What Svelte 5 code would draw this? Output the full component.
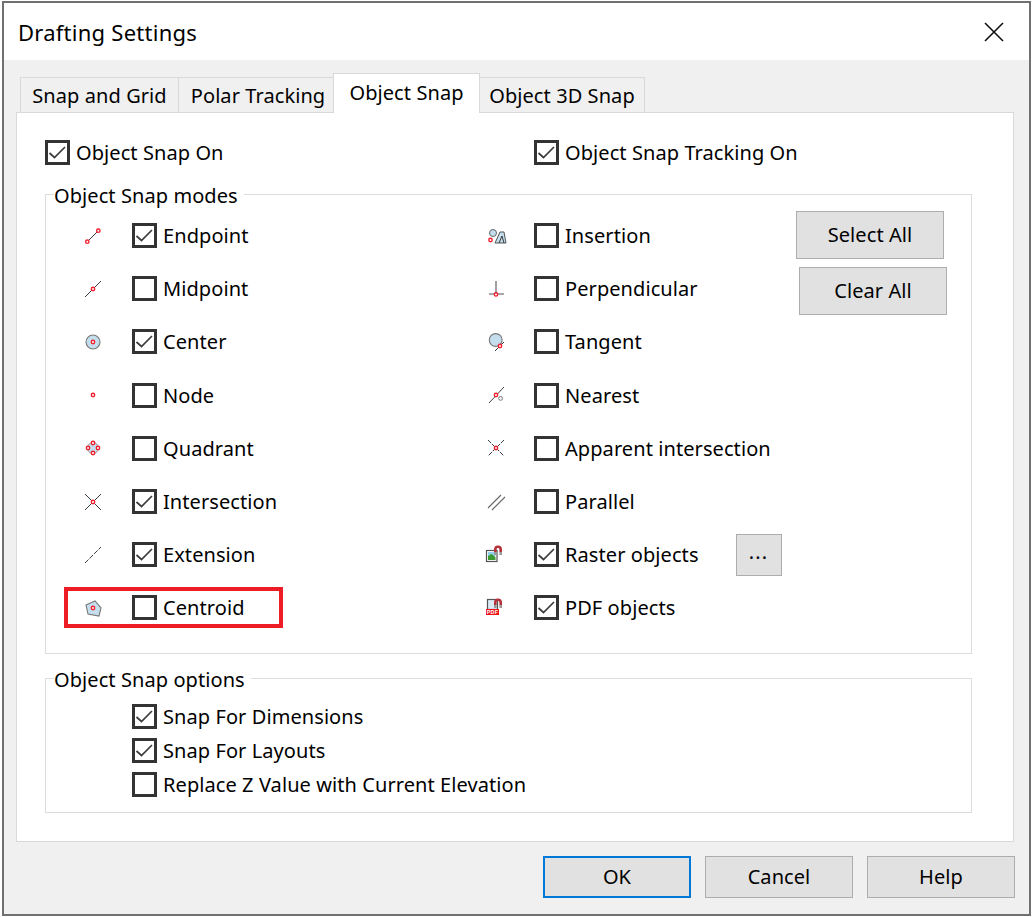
<script lang="ts">
  type Mode = { icon: string; label: string; checked: boolean };

  const leftModes: Mode[] = [
    { icon: 'endpoint', label: 'Endpoint', checked: true },
    { icon: 'midpoint', label: 'Midpoint', checked: false },
    { icon: 'center', label: 'Center', checked: true },
    { icon: 'node', label: 'Node', checked: false },
    { icon: 'quadrant', label: 'Quadrant', checked: false },
    { icon: 'intersection', label: 'Intersection', checked: true },
    { icon: 'extension', label: 'Extension', checked: true },
    { icon: 'centroid', label: 'Centroid', checked: false }
  ];

  const rightModes: Mode[] = [
    { icon: 'insertion', label: 'Insertion', checked: false },
    { icon: 'perpendicular', label: 'Perpendicular', checked: false },
    { icon: 'tangent', label: 'Tangent', checked: false },
    { icon: 'nearest', label: 'Nearest', checked: false },
    { icon: 'apparent', label: 'Apparent intersection', checked: false },
    { icon: 'parallel', label: 'Parallel', checked: false },
    { icon: 'raster', label: 'Raster objects', checked: true },
    { icon: 'pdf', label: 'PDF objects', checked: true }
  ];

  const options = [
    { label: 'Snap For Dimensions', checked: true },
    { label: 'Snap For Layouts', checked: true },
    { label: 'Replace Z Value with Current Elevation', checked: false }
  ];

  const tabs = ['Snap and Grid', 'Polar Tracking', 'Object Snap', 'Object 3D Snap'];
  const activeTab = 'Object Snap';
</script>

{#snippet box(checked: boolean)}
  <span class="box">
    {#if checked}
      <svg viewBox="0 0 19 19" width="19" height="19" fill="none" stroke="#3c3c3c" stroke-width="1.7" aria-hidden="true">
        <path d="M1.5 10 L6.5 14.5 L17 4" />
      </svg>
    {/if}
  </span>
{/snippet}

{#snippet snapDot(cx: number, cy: number)}
  <circle {cx} {cy} r="1.7" fill="#fff" stroke="#f0202e" stroke-width="1.4" />
{/snippet}

{#snippet magnet()}
  <path d="M11.3 9 V6.5 A2.7 2.7 0 0 1 16.7 6.5 V9" stroke="#b5323a" stroke-width="2.6" />
  <path d="M11.3 9 V12 M16.7 9 V12" stroke="#9a9a9a" stroke-width="2.6" />
{/snippet}

{#snippet icon(name: string)}
  <svg class="icon" viewBox="0 0 24 24" width="24" height="24" fill="none" stroke="#3a3a3a" stroke-width="1" aria-hidden="true">
    {#if name === 'endpoint'}
      <path d="M6 18 L17 7" />
      {@render snapDot(6.3, 17.7)}
      {@render snapDot(17.3, 6.7)}
    {:else if name === 'midpoint'}
      <path d="M4 20 L20 4" />
      {@render snapDot(12, 12)}
    {:else if name === 'center'}
      <circle cx="12" cy="12" r="7" fill="#c5deee" stroke="#777" stroke-width="1.1" />
      {@render snapDot(12, 12)}
    {:else if name === 'node'}
      {@render snapDot(12, 12)}
    {:else if name === 'quadrant'}
      <circle cx="12" cy="12" r="5.5" fill="#c5deee" stroke="#999" />
      {@render snapDot(12, 7)}
      {@render snapDot(7, 12)}
      {@render snapDot(17, 12)}
      {@render snapDot(12, 17)}
    {:else if name === 'intersection'}
      <path d="M4 4 L20 20 M20 4 L4 20" />
      {@render snapDot(12, 12)}
    {:else if name === 'extension'}
      <path d="M4 20 L20 4" stroke-dasharray="5 1.4" />
    {:else if name === 'centroid'}
      <path d="M5 9 L14 5 L20 12 L18 20 L7 18 Z" fill="#c5deee" stroke="#777" stroke-width="1.1" />
      {@render snapDot(12, 12)}
    {:else if name === 'insertion'}
      <path d="M11 19 L16 8 L20 8 L22 19 Z" fill="#c5deee" stroke="#555" stroke-width="1" />
      <path d="M15 19 L18 12 L20 19" />
      <circle cx="9" cy="9" r="3.5" fill="#c5deee" stroke="#666" stroke-width="1" />
      {@render snapDot(6.5, 16)}
    {:else if name === 'perpendicular'}
      <path d="M12 4 L12 17 M5 17 L20 17" stroke="#555" stroke-width="1.1" />
      {@render snapDot(12, 17.4)}
    {:else if name === 'tangent'}
      <circle cx="11.7" cy="10" r="6.4" fill="#c5deee" stroke="#777" stroke-width="1.1" />
      <path d="M11 21 L20 12" />
      {@render snapDot(16, 16)}
    {:else if name === 'nearest'}
      <path d="M5 20 L20 4" stroke="#444" />
      {@render snapDot(12, 12)}
      <circle cx="16.6" cy="15.4" r="1.9" fill="#fff" stroke="#777" />
    {:else if name === 'apparent'}
      <path d="M4 4 L20 20 M20 4 L4 20" stroke-dasharray="4.5 1.2" />
      {@render snapDot(12, 12)}
    {:else if name === 'parallel'}
      <path d="M4 18 L17 5 M8 20 L21 7" stroke="#666" stroke-width="1.1" />
    {:else if name === 'raster'}
      <rect x="2.5" y="7.5" width="10.5" height="11" fill="#fff" stroke="#555" stroke-width="1.2" />
      <rect x="4" y="9" width="7.5" height="4" fill="#8fd0ee" stroke="none" />
      <path d="M4 17 V13 L7.5 11 L11.5 14 V17 Z" fill="#3c9a32" stroke="none" />
      {@render magnet()}
    {:else if name === 'pdf'}
      <rect x="3.5" y="3.5" width="10" height="10" fill="#dcecf7" stroke="#555" stroke-width="1.2" />
      {@render magnet()}
      <rect x="2" y="13" width="13" height="6" fill="#f01018" stroke="none" />
      <text class="pdf-tag" x="8.5" y="18">PDF</text>
    {/if}
  </svg>
{/snippet}

{#snippet modeRow(mode: Mode)}
  <div class="mode">
    <span class="icon-slot">{@render icon(mode.icon)}</span>
    {@render box(mode.checked)}
    <span class="label">{mode.label}</span>
    {#if mode.icon === 'raster'}
      <button type="button" class="btn dots">...</button>
    {/if}
    {#if mode.icon === 'centroid'}
      <span class="highlight"></span>
    {/if}
  </div>
{/snippet}

<div class="window">
  <header class="titlebar">
    <span class="title">Drafting Settings</span>
    <svg class="close" viewBox="0 0 20 20" width="20" height="20" stroke="#111" stroke-width="1.6" aria-label="Close">
      <path d="M1 1 L19 19 M19 1 L1 19" />
    </svg>
  </header>

  <div class="body">
    <div class="tabs">
      {#each tabs as tab}
        <span class="tab" class:active={tab === activeTab}>{tab}</span>
      {/each}
    </div>

    <section class="panel">
      <div class="top-row">
        <div class="check">{@render box(true)}<span class="label">Object Snap On</span></div>
        <div class="check">{@render box(true)}<span class="label">Object Snap Tracking On</span></div>
      </div>

      <fieldset class="group modes">
        <legend>Object Snap modes</legend>
        <div class="mode-grid">
          <div class="col left">
            {#each leftModes as mode}{@render modeRow(mode)}{/each}
          </div>
          <div class="col right">
            {#each rightModes as mode}{@render modeRow(mode)}{/each}
          </div>
          <div class="side">
            <button type="button" class="btn select">Select All</button>
            <button type="button" class="btn clear">Clear All</button>
          </div>
        </div>
      </fieldset>

      <fieldset class="group opts">
        <legend>Object Snap options</legend>
        <div class="opt-list">
          {#each options as opt}
            <div class="check opt">{@render box(opt.checked)}<span class="label">{opt.label}</span></div>
          {/each}
        </div>
      </fieldset>
    </section>

    <footer class="actions">
      <button type="button" class="btn action default">OK</button>
      <button type="button" class="btn action">Cancel</button>
      <button type="button" class="btn action">Help</button>
    </footer>
  </div>
</div>

<style>
  :global(body) {
    background: #fff;
    font-family: "Noto Sans", "Open Sans", sans-serif;
  }
  .window {
    box-sizing: border-box;
    width: 1029px;
    height: 915px;
    margin: 1px 0 0 2px;
    border: 2px solid #707070;
    display: flex;
    flex-direction: column;
    color: #000;
    font-size: 20px;
    letter-spacing: 0.08px;
  }
  .titlebar {
    height: 57px;
    flex: none;
    background: #fff;
    display: flex;
    align-items: center;
    justify-content: space-between;
    padding: 0 25px 0 14px;
  }
  .title {
    font-size: 22px;
    letter-spacing: 0.25px;
  }
  .close {
    margin-top: 1px;
  }
  .body {
    flex: 1;
    background: #f0f0f0;
    padding: 13px 15px 0 12px;
    display: flex;
    flex-direction: column;
  }
  .tabs {
    display: flex;
    align-items: flex-end;
    height: 40px;
    padding-left: 4px;
    position: relative;
    z-index: 1;
    margin-bottom: -1px;
  }
  .tab {
    box-sizing: border-box;
    height: 36px;
    padding-top: 4px;
    text-align: center;
    background: #f0f0f0;
    border: 1px solid #d9d9d9;
    border-right: none;
    white-space: nowrap;
  }
  .tab:nth-child(1) { width: 158px; }
  .tab:nth-child(2) { width: 155px; padding-left: 4px; }
  .tab:nth-child(3) { width: 147px; }
  .tab:nth-child(4) { width: 165px; border-right: 1px solid #d9d9d9; border-left: none; }
  .tab.active {
    height: 40px;
    padding-top: 5px;
    background: #fff;
    border-right: 1px solid #d9d9d9;
    border-bottom: none;
  }
  .panel {
    box-sizing: border-box;
    height: 730px;
    background: #fff;
    border: 1px solid #d9d9d9;
    padding: 0 41px 0 28px;
  }
  .top-row {
    display: grid;
    grid-template-columns: 489px 1fr;
    margin-top: 26px;
    height: 26px;
  }
  .check {
    display: flex;
    align-items: center;
    gap: 6px;
  }
  .box {
    box-sizing: border-box;
    flex: none;
    width: 25px;
    height: 25px;
    border: 3px solid #333;
    background: #fff;
    display: inline-flex;
    align-items: center;
    justify-content: center;
  }
  .label {
    white-space: nowrap;
  }
  .group {
    margin: 0;
    padding: 0;
    min-width: 0;
    border: 1px solid #dcdcdc;
  }
  legend {
    margin-left: 8px;
    padding: 0 6px 0 0;
    line-height: 24px;
    position: relative;
    top: 2px;
  }
  .modes {
    margin-top: 17px;
    height: 470px;
  }
  .mode-grid {
    display: grid;
    grid-template-columns: 439px 1fr 175px;
    padding-top: 3px;
  }
  .col {
    display: grid;
    grid-auto-rows: 53.2px;
  }
  .mode {
    position: relative;
    display: flex;
    align-items: center;
    gap: 6px;
  }
  .icon-slot {
    flex: none;
    display: flex;
    justify-content: center;
  }
  .left .icon-slot { width: 24px; margin: 0 21px 0 35px; }
  .right .icon-slot { width: 24px; margin: 0 20px 0 -1px; }
  .icon {
    display: block;
  }
  .pdf-tag {
    font-family: "Liberation Sans", sans-serif;
    font-size: 5.4px;
    font-weight: 700;
    letter-spacing: 0.3px;
    fill: #fff;
    stroke: none;
    text-anchor: middle;
  }
  .btn {
    box-sizing: border-box;
    font: inherit;
    letter-spacing: inherit;
    color: #000;
    background: #e1e1e1;
    border: 1px solid #adadad;
    padding: 0 0 2px;
    cursor: default;
  }
  .dots {
    width: 46px;
    height: 42px;
    margin-left: 31px;
    padding-bottom: 6px;
    letter-spacing: 1.2px;
  }
  .side {
    display: flex;
    flex-direction: column;
    gap: 8px;
    padding-top: 2px;
  }
  .select { width: 148px; height: 48px; }
  .clear { width: 148px; height: 48px; margin-left: 3px; }
  .highlight {
    position: absolute;
    left: 18px;
    top: 6px;
    width: 219px;
    height: 41px;
    box-sizing: border-box;
    border: 4px solid #ee1c25;
    pointer-events: none;
  }
  .opts {
    margin-top: 12px;
    height: 145px;
  }
  .opt-list {
    padding: 9px 0 0 86px;
  }
  .opt {
    height: 34px;
  }
  .actions {
    display: flex;
    justify-content: flex-end;
    gap: 14px;
    margin: 14px -1px 0 0;
  }
  .action {
    width: 148px;
    height: 42px;
  }
  .action.default {
    border: 2px solid #0078d7;
  }
</style>
